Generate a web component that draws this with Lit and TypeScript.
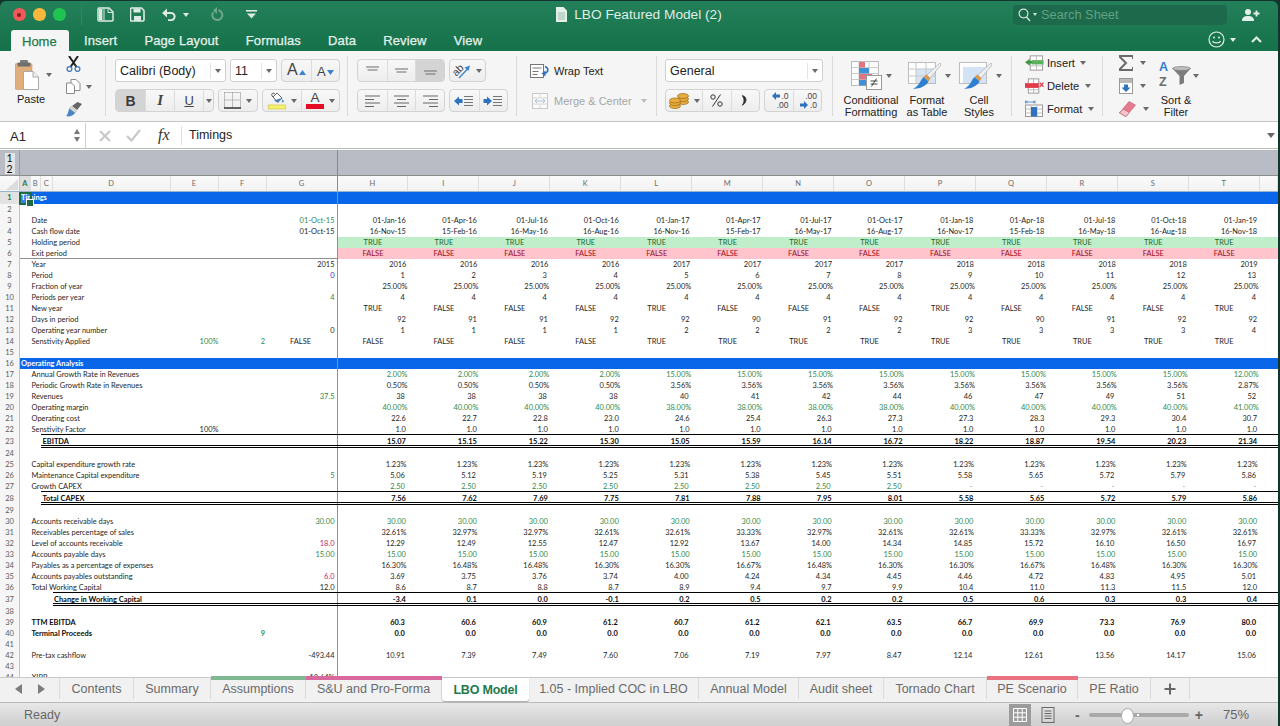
import { LitElement, html, svg, css, nothing } from "lit";
import { customElement } from "lit/decorators.js";

type Tone = "" | "g" | "p" | "b" | "d";
interface Row {
  n: number;
  label?: string;
  col?: "a" | "b" | "c" | "d";
  strong?: boolean;
  blue?: boolean;
  e?: [string, Tone?];
  f?: [string, Tone?];
  g?: [string, Tone?];
  gAlign?: boolean;
  vals?: string[];
  tone?: Tone;
  fill?: "ok" | "bad";
  center?: boolean;
  pad?: 1 | 2 | 3 | 4;
  rule?: "c" | "d";
  cls?: string;
  line?: boolean;
}

const rep = (v: string, n: number) => Array(n).fill(v);
const T = "TRUE";
const F = "FALSE";
const colLetters = "H I J K L M N O P Q R S T".split(" ");

const rows: Row[] = [
  { n: 1, label: "Timings", col: "a", blue: true, strong: true, cls: "h12" },
  { n: 2 },
  { n: 3, label: "Date", g: ["01-Oct-15", "g"], pad: 3, vals: "01-Jan-16 01-Apr-16 01-Jul-16 01-Oct-16 01-Jan-17 01-Apr-17 01-Jul-17 01-Oct-17 01-Jan-18 01-Apr-18 01-Jul-18 01-Oct-18 01-Jan-19".split(" ") },
  { n: 4, label: "Cash flow date", g: ["01-Oct-15"], pad: 3, vals: "16-Nov-15 15-Feb-16 16-May-16 16-Aug-16 16-Nov-16 15-Feb-17 16-May-17 16-Aug-17 16-Nov-17 15-Feb-18 16-May-18 16-Aug-18 16-Nov-18".split(" ") },
  { n: 5, label: "Holding period", vals: rep(T, 13), center: true, fill: "ok" },
  { n: 6, label: "Exit period", vals: rep(F, 13), center: true, fill: "bad", line: true },
  { n: 7, label: "Year", g: ["2015"], pad: 2, vals: [...rep("2016", 4), ...rep("2017", 4), ...rep("2018", 4), "2019"] },
  { n: 8, label: "Period", g: ["0", "b"], pad: 4, vals: "1 2 3 4 5 6 7 8 9 10 11 12 13".split(" ") },
  { n: 9, label: "Fraction of year", pad: 1, vals: rep("25.00%", 13) },
  { n: 10, label: "Periods per year", g: ["4", "g"], pad: 4, vals: rep("4", 13) },
  { n: 11, label: "New year", center: true, vals: [T, F, F, F, T, F, F, F, T, F, F, F, T] },
  { n: 12, label: "Days in period", pad: 3, vals: "92 91 91 92 92 90 91 92 92 90 91 92 92".split(" ") },
  { n: 13, label: "Operating year number", g: ["0"], pad: 4, vals: "1 1 1 1 2 2 2 2 3 3 3 3 4".split(" ") },
  { n: 14, label: "Senstivity Applied", e: ["100%", "g"], f: ["2", "g"], g: [F], gAlign: true, center: true, vals: [...rep(F, 4), ...rep(T, 9)] },
  { n: 15 },
  { n: 16, label: "Operating Analysis", col: "a", blue: true, strong: true },
  { n: 17, label: "Annual Growth Rate in Revenues", tone: "g", pad: 1, vals: [...rep("2.00%", 4), ...rep("15.00%", 8), "12.00%"] },
  { n: 18, label: "Periodic Growth Rate in Revenues", pad: 1, vals: [...rep("0.50%", 4), ...rep("3.56%", 8), "2.87%"] },
  { n: 19, label: "Revenues", g: ["37.5", "g"], pad: 4, vals: "38 38 38 38 40 41 42 44 46 47 49 51 52".split(" ") },
  { n: 20, label: "Operating margin", tone: "g", pad: 1, vals: [...rep("40.00%", 4), ...rep("38.00%", 4), ...rep("40.00%", 4), "41.00%"] },
  { n: 21, label: "Operating cost", pad: 3, vals: "22.6 22.7 22.8 23.0 24.6 25.4 26.3 27.3 27.3 28.3 29.3 30.4 30.7".split(" ") },
  { n: 22, label: "Senstivity Factor", e: ["100%"], pad: 3, vals: rep("1.0", 13) },
  { n: 23, label: "EBITDA", col: "c", strong: true, rule: "c", pad: 3, vals: "15.07 15.15 15.22 15.30 15.05 15.59 16.14 16.72 18.22 18.87 19.54 20.23 21.34".split(" ") },
  { n: 24 },
  { n: 25, label: "Capital expenditure growth rate", pad: 2, vals: rep("1.23%", 13) },
  { n: 26, label: "Maintenance Capital expenditure", g: ["5", "g"], pad: 4, vals: "5.06 5.12 5.19 5.25 5.31 5.38 5.45 5.51 5.58 5.65 5.72 5.79 5.86".split(" ") },
  { n: 27, label: "Growth CAPEX", tone: "g", pad: 4, vals: [...rep("2.50", 8), ...rep("-", 5)] },
  { n: 28, label: "Total CAPEX", col: "c", strong: true, rule: "c", pad: 3, vals: "7.56 7.62 7.69 7.75 7.81 7.88 7.95 8.01 5.58 5.65 5.72 5.79 5.86".split(" ") },
  { n: 29 },
  { n: 30, label: "Accounts receivable days", g: ["30.00", "g"], tone: "g", pad: 3, vals: rep("30.00", 13) },
  { n: 31, label: "Receivables percentage of sales", pad: 2, vals: "32.61% 32.97% 32.97% 32.61% 32.61% 33.33% 32.97% 32.61% 32.61% 33.33% 32.97% 32.61% 32.61%".split(" ") },
  { n: 32, label: "Level of accounts receivable", g: ["18.0", "p"], pad: 4, vals: "12.29 12.49 12.55 12.47 12.92 13.67 14.00 14.34 14.85 15.72 16.10 16.50 16.97".split(" ") },
  { n: 33, label: "Accounts payable days", g: ["15.00", "g"], tone: "g", pad: 3, vals: rep("15.00", 13) },
  { n: 34, label: "Payables as a percentage of expenses", pad: 2, vals: "16.30% 16.48% 16.48% 16.30% 16.30% 16.67% 16.48% 16.30% 16.30% 16.67% 16.48% 16.30% 16.30%".split(" ") },
  { n: 35, label: "Accounts payables outstanding", g: ["6.0", "p"], pad: 4, vals: "3.69 3.75 3.76 3.74 4.00 4.24 4.34 4.45 4.46 4.72 4.83 4.95 5.01".split(" ") },
  { n: 36, label: "Total Working Capital", g: ["12.0"], pad: 3, vals: "8.6 8.7 8.8 8.7 8.9 9.4 9.7 9.9 10.4 11.0 11.3 11.5 12.0".split(" ") },
  { n: 37, label: "Change in Working Capital", col: "d", strong: true, rule: "d", pad: 3, vals: "-3.4 0.1 0.0 -0.1 0.2 0.5 0.2 0.2 0.5 0.6 0.3 0.3 0.4".split(" ") },
  { n: 38 },
  { n: 39, label: "TTM EBITDA", strong: true, pad: 4, vals: "60.3 60.6 60.9 61.2 60.7 61.2 62.1 63.5 66.7 69.9 73.3 76.9 80.0".split(" ") },
  { n: 40, label: "Terminal Proceeds", strong: true, f: ["9", "g"], pad: 4, vals: rep("0.0", 13) },
  { n: 41 },
  { n: 42, label: "Pre-tax cashflow", g: ["-493.44"], pad: 4, vals: "10.91 7.39 7.49 7.60 7.06 7.19 7.97 8.47 12.14 12.61 13.56 14.17 15.06".split(" ") },
  { n: 43 },
  { n: 44, label: "XIRR", g: ["18.64%"] },
];

const sheetTabs: { t: string; c?: string }[] = [
  { t: "Contents", c: "w-con" },
  { t: "Summary", c: "w-sum" },
  { t: "Assumptions", c: "w-ass mark-green" },
  { t: "S&U and Pro-Forma", c: "w-su mark-pink" },
  { t: "LBO Model", c: "w-lbo active" },
  { t: "1.05 - Implied COC in LBO", c: "w-imp" },
  { t: "Annual Model", c: "w-ann" },
  { t: "Audit sheet", c: "w-aud" },
  { t: "Tornado Chart", c: "w-tor" },
  { t: "PE Scenario", c: "w-pes mark-red" },
  { t: "PE Ratio", c: "w-per" },
];

const caret = html`<span class="caret"></span>`;

/* ---- title bar icons ---- */
const iSidebar = html`<svg width="17" height="15" viewBox="0 0 17 15"><path d="M2 1h10l4 4v8a1 1 0 0 1-1 1H2a1 1 0 0 1-1-1V2a1 1 0 0 1 1-1z" fill="none" stroke="#dcebe3" stroke-width="1.5"/><rect x="2" y="2" width="3.4" height="11" fill="#dcebe3"/><path d="M7 1.500v12" stroke="#dcebe3" stroke-width="1"/><path d="M11 1.500v4h4.500" fill="none" stroke="#dcebe3"/></svg>`;
const iSave = html`<svg width="15" height="15" viewBox="0 0 15 15"><path d="M1.500 1h10l2.500 2.500V13a1 1 0 0 1-1 1H1.500a1 1 0 0 1-1-1V2a1 1 0 0 1 1-1z" fill="none" stroke="#dcebe3" stroke-width="1.6"/><rect x="3.500" y="1.500" width="7" height="4" fill="#dcebe3"/><rect x="4" y="9" width="7" height="5" fill="#dcebe3"/></svg>`;
const iUndo = html`<svg width="16" height="13" viewBox="0 0 16 13"><path d="M2.500 5h7.500a3.600 3.600 0 0 1 0 7.200H7" fill="none" stroke="#dcebe3" stroke-width="2"/><path d="M6 .5 1 5l5 4.500z" fill="#dcebe3"/></svg>`;
const iRedo = html`<svg width="14" height="15" viewBox="0 0 14 15"><path d="M8.500 3.200a5 5 0 1 1-5.300 2" fill="none" stroke="#6ea78c" stroke-width="2"/><path d="M7 0v7L3 3.500z" fill="#6ea78c"/></svg>`;
const iCustom = html`<svg width="11" height="9" viewBox="0 0 11 9"><rect width="11" height="1.600" fill="#dcebe3"/><path d="M1 3.500h9L5.500 8.500z" fill="#dcebe3"/></svg>`;
const iTitleDoc = html`<svg width="11" height="15" viewBox="0 0 11 15"><path d="M0 0h7.500L11 3.500V15H0z" fill="#e4efe9"/><path d="M2 6h7M2 8h7M2 10h7M2 12h7" stroke="#7ba993" stroke-width=".7"/></svg>`;
const iSearch = html`<svg width="13" height="14" viewBox="0 0 13 14"><circle cx="5.500" cy="5.500" r="4.400" fill="none" stroke="#d5e6dd" stroke-width="1.200"/><path d="m8.500 9 3.500 4" stroke="#d5e6dd" stroke-width="1.300"/></svg>`;
const iPerson = html`<svg width="18" height="12" viewBox="0 0 18 12"><circle cx="6" cy="3" r="3" fill="#e3efe9"/><path d="M0 12c0-4 2.500-5 6-5s6 1 6 5z" fill="#e3efe9"/><path d="M14.500 1.500v6M11.500 4.500h6" stroke="#e3efe9" stroke-width="1.800"/></svg>`;
const iSmile = html`<svg width="17" height="17" viewBox="0 0 17 17"><circle cx="8.500" cy="8.500" r="7.500" fill="none" stroke="#e3efe9" stroke-width="1.200"/><circle cx="6" cy="6.500" r="1" fill="#e3efe9"/><circle cx="11" cy="6.500" r="1" fill="#e3efe9"/><path d="M4.500 10c1 2.500 7 2.500 8 0" fill="none" stroke="#e3efe9" stroke-width="1.100"/></svg>`;
const iChevUp = html`<svg width="11" height="7" viewBox="0 0 11 7"><path d="m1 6 4.500-4.500L10 6" fill="none" stroke="#e3efe9" stroke-width="2"/></svg>`;

/* ---- ribbon icons ---- */
const iPaste = html`<svg width="24" height="30" viewBox="0 0 24 30"><rect x="0" y="3.500" width="17" height="26" rx="1.500" fill="#dfae7b" stroke="#c79766" stroke-width=".6"/><rect x="5" y="0" width="8" height="3" rx="1" fill="#7b7b7b"/><rect x="2.500" y="2.500" width="13" height="4" rx="1" fill="#6f6f6f"/><path d="M8.500 11.500h9.500l5.500 5.500v12.500h-15z" fill="#fff" stroke="#a9a9a9"/><path d="M18 11.500V17h5.500" fill="#eee" stroke="#a9a9a9"/></svg>`;
const iCut = html`<svg width="15" height="16" viewBox="0 0 15 16"><path d="M3 0l7.500 11M12 0 4.500 11" stroke="#222" stroke-width="2"/><circle cx="3.500" cy="13" r="2.400" fill="none" stroke="#3f79b8" stroke-width="1.300"/><circle cx="11.500" cy="13" r="2.400" fill="none" stroke="#3f79b8" stroke-width="1.300"/></svg>`;
const iCopy = html`<svg width="15" height="15" viewBox="0 0 15 15"><path d="M5 .5h5l4 4v7H5z" fill="#fff" stroke="#8a8a8a"/><path d="M.5 4h5l3 3v7.500H.5z" fill="#fff" stroke="#8a8a8a"/></svg>`;
const iBrush = html`<svg width="17" height="15" viewBox="0 0 17 15"><path d="M6 4 11.500 0 16 2 11 8z" fill="#666"/><path d="M5 4.500 10.500 9 9 11 3.500 6.500z" fill="#dcdcdc" stroke="#999" stroke-width=".5"/><path d="M3.500 6.500 9 11c-2 3-6 4-9 3 2-1 2-5 3.500-7.500z" fill="#4a85c4"/></svg>`;
const triUp = html`<svg width="7" height="5" viewBox="0 0 7 5"><path d="M0 5 3.500 0 7 5z" fill="#3b83cc"/></svg>`;
const triDn = html`<svg width="7" height="5" viewBox="0 0 7 5"><path d="M0 0h7L3.500 5z" fill="#3b83cc"/></svg>`;
const iBorder = html`<svg width="17" height="17" viewBox="0 0 17 17"><path d="M.5.500h16M.5 8h16M.5.500v15M8.500.500v15M16.500.500v15" stroke="#888" stroke-dasharray="1 1" fill="none"/><path d="M0 16h17" stroke="#333" stroke-width="1.300"/></svg>`;
const iFill = html`<svg width="18" height="18" viewBox="0 0 18 18"><path d="m5 5 4-4 5 5-4 4.500z" fill="#fff" stroke="#666"/><path d="M5 5c-3-3 0-5 2-3" fill="none" stroke="#555"/><path d="M6 8.500 13.500 6l-4 4.500z" fill="#3f7fc2"/><path d="M14.500 7c1.500 2 1.500 3 .5 3.500s-1-1.500-.5-3.500z" fill="#3f7fc2"/><rect x=".5" y="13" width="17" height="4" fill="#f7f16a" stroke="#d2c94e" stroke-width=".7"/></svg>`;
const iAlignV = (y: number) => html`<svg width="13" height="9" viewBox="0 0 13 9"><path d="M0 ${y}h13M1.500 ${y + 3}h10" stroke="#6e6e6e" stroke-width="1"/></svg>`;
const iAlignH = (kind: "l" | "c" | "r") => {
  const p = kind === "l" ? "M0 1h15M0 4.500h9M0 8h15M0 11.500h9" : kind === "c" ? "M0 1h15M3 4.500h9M0 8h15M3 11.500h9" : "M0 1h15M6 4.500h9M0 8h15M6 11.500h9";
  return html`<svg width="15" height="12" viewBox="0 0 15 12"><path d=${p} stroke="#666" stroke-width="1"/></svg>`;
};
const iOrientArrow = html`<svg width="18" height="16" viewBox="0 0 18 16"><path d="m6 15 8.500-9" stroke="#3b83cc" stroke-width="1.300"/><path d="M17 2.500 15.500 8 11.500 4.500z" fill="#3b83cc"/></svg>`;
const iIndent = (dir: "l" | "r") => html`<svg width="20" height="12" viewBox="0 0 20 12"><path d="M10 1.500h9M10 4.500h9M10 7.500h9M10 10.500h9" stroke="#666" stroke-width=".9"/>${dir === "l"
  ? svg`<path d="M0 6 5 1.500V4h3.500v4H5v2.500z" fill="#2f73c0"/>`
  : svg`<path d="M9 6 4 1.500V4H.5v4H4v2.500z" fill="#2f73c0"/>`}</svg>`;
const iWrap = html`<svg width="20" height="14" viewBox="0 0 20 14"><rect x=".5" y=".5" width="13" height="13" fill="#fff" stroke="#777"/><path d="M2.500 4h9M2.500 7.500h6M2.500 10.500h5" stroke="#777"/><path d="M15 2.500c4 1.500 4 6-1 7" fill="none" stroke="#2f73c0" stroke-width="1.500"/><path d="M15.500 6.500v6l-4-3z" fill="#2f73c0"/></svg>`;
const iMerge = html`<svg width="16" height="16" viewBox="0 0 16 16"><rect x=".5" y=".5" width="15" height="15" fill="#fbfbfb" stroke="#c9c9c9"/><path d="M.5 5h15M.5 11h15M8 .5V4M8 12v3.500" stroke="#d4d4d4"/><path d="M3 8h10M5 6 3 8l2 2M11 6l2 2-2 2" fill="none" stroke="#a9bdd2"/></svg>`;
const iCoins = html`<svg width="20" height="16" viewBox="0 0 20 16"><g stroke="#9a6a1a" stroke-width=".7" fill="#e8ad3c"><ellipse cx="14" cy="9" rx="5.500" ry="2.500"/><ellipse cx="14" cy="6" rx="5.500" ry="2.500"/><ellipse cx="14" cy="3" rx="5.500" ry="2.500"/><ellipse cx="6" cy="13" rx="5.500" ry="2.500"/><ellipse cx="6" cy="10" rx="5.500" ry="2.500"/><ellipse cx="6" cy="7.500" rx="5.500" ry="2.500"/></g></svg>`;
const iPct = html`<svg width="13" height="13" viewBox="0 0 13 13"><circle cx="3" cy="3" r="2.200" fill="none" stroke="#333" stroke-width="1"/><circle cx="10" cy="10" r="2.200" fill="none" stroke="#333" stroke-width="1"/><path d="M10.500.5 2.500 12.500" stroke="#333" stroke-width="1"/></svg>`;
const iComma = html`<svg width="6" height="11" viewBox="0 0 6 11"><path d="M0 .5c5 .5 6 7 0 10 2.500-3 2.500-7 0-10z" fill="#333" stroke="#333" stroke-width=".6"/></svg>`;
const arrowLeft = html`<svg width="8" height="8" viewBox="0 0 8 8"><path d="M0 4 4 0v2.500h4v3H4V8z" fill="#2f73c0"/></svg>`;
const arrowRight = html`<svg width="8" height="8" viewBox="0 0 8 8"><path d="M8 4 4 0v2.500H0v3h4V8z" fill="#2f73c0"/></svg>`;
const iCond = html`<svg width="31" height="29" viewBox="0 0 31 29"><rect x=".5" y=".5" width="27" height="24" fill="#fdfdfd" stroke="#bbb"/><path d="M8 .5v24M18 .5v24M.5 6.500h27M.5 12.500h27M.5 18.500h27" stroke="#ccc"/><rect x="8" y="1" width="6" height="5.500" fill="#e2737f"/><rect x="8" y="7" width="10" height="5.500" fill="#3f90d6"/><rect x="8" y="13" width="13" height="5.500" fill="#e2737f"/><rect x="8" y="19" width="8" height="5.500" fill="#3f90d6"/><rect x="15.500" y="14.500" width="15" height="14" fill="#fff" stroke="#999"/><path d="M19.500 20h7M19.500 23h7M25.500 17.500l-5 8" stroke="#333" stroke-width=".9"/></svg>`;
const brush = svg`<path d="M32 1 19 13l3 3L33 3z" fill="#f2f2f2" stroke="#aaa" stroke-width=".7"/><path d="M18 12.500l4.500 4-2 3-5-4.500z" fill="#d99b4f"/><path d="M15.500 15 20.500 19.500C18 25 9 27.500 5 26.500 10 25.500 12 19 15.500 15z" fill="#2f7fd0"/>`;
const iTable = html`<svg width="33" height="28" viewBox="0 0 33 28"><rect x=".5" y=".5" width="27" height="21" fill="#fdfdfd" stroke="#bdbdbd"/><rect x="8" y="7" width="19" height="14" fill="#d6e4f3"/><path d="M8 .5v21M18 .5v21M.5 7h27M.5 14h27" stroke="#c8c8c8"/>${brush}</svg>`;
const iCell = html`<svg width="33" height="28" viewBox="0 0 33 28"><rect x=".5" y=".5" width="27" height="21" fill="#fdfdfd" stroke="#bdbdbd"/><rect x="4" y="5" width="23" height="16" fill="#d3e3f5"/>${brush}</svg>`;
const iInsert = html`<svg width="20" height="16" viewBox="0 0 20 16"><rect x="5.500" y=".5" width="13" height="15" fill="#fff" stroke="#999"/><path d="M12 .5v15M5.500 11h13" stroke="#bbb"/><rect x="7" y="5" width="12.500" height="4.500" fill="#5bb25e"/><path d="M0 7.200 5 3.500v7.400z" fill="#3e9a41"/><path d="M4 6h3.500v2.500H4z" fill="#3e9a41"/></svg>`;
const iDelete = html`<svg width="20" height="16" viewBox="0 0 20 16"><rect x="3.500" y=".5" width="11" height="15" fill="#fff" stroke="#999"/><path d="M9 .5v15M3.500 12h11" stroke="#bbb"/><rect x="0" y="5" width="14.500" height="5" fill="#e23a48"/><path d="m15.500 4.500 4 4.500m0-4.500-4 4.500" stroke="#e23a48" stroke-width="1.300"/></svg>`;
const iFormat = html`<svg width="18" height="17" viewBox="0 0 18 17"><path d="M.5.500v3M10 .5v3M1 2h8.500M2.500 1 1 2l1.500 1M8 1l1.500 1L8 3" fill="none" stroke="#3b83cc" stroke-width=".8"/><rect x=".5" y="5" width="17" height="11.500" fill="#fff" stroke="#999"/><path d="M6 5v11.500M12 5v11.500M.5 9h17M.5 13h17" stroke="#bbb"/><rect x="6" y="7" width="6" height="9.500" fill="#2f73c0"/></svg>`;
const iSum = html`<svg width="14" height="16" viewBox="0 0 14 16"><path d="M14 4V1H1v1l6 6-6 6v1h13v-3" fill="none" stroke="#6b6b6b" stroke-width="2"/></svg>`;
const iDown = html`<svg width="14" height="16" viewBox="0 0 14 16"><rect x=".5" y=".5" width="13" height="15" fill="#fff" stroke="#999"/><rect x="1" y="1" width="12" height="4" fill="#b9b9b9"/><path d="M5 6.500h4v3h2.500L7 14 2.500 9.500H5z" fill="#2f73c0"/></svg>`;
const iEraser = html`<svg width="17" height="16" viewBox="0 0 17 16"><path d="M10 .5 16.500 4 7 15.500.5 12z" fill="#e77a8c" stroke="#b85a6b" stroke-width=".6"/><path d="M.5 12 4 8l6.500 3.500L7 15.500z" fill="#f2c4cc" stroke="#b85a6b" stroke-width=".6"/></svg>`;
const iFunnel = html`<svg width="19" height="19" viewBox="0 0 19 19"><path d="M0 2h19l-7 8v7l-4.500 2v-9z" fill="#7c7c7c"/><ellipse cx="9.500" cy="2.500" rx="9" ry="2" fill="#bdbdbd" stroke="#777" stroke-width=".6"/></svg>`;

const iX = html`<svg width="14" height="14" viewBox="0 0 14 14"><path d="m2 2 10 10M12 2 2 12" stroke="#c9c9c9" stroke-width="2.200"/></svg>`;
const iCheck = html`<svg width="15" height="13" viewBox="0 0 15 13"><path d="m1 7 4.500 4.500L14 1" fill="none" stroke="#c9c9c9" stroke-width="2.200"/></svg>`;

@customElement("app-root")
export class AppRoot extends LitElement {
  static styles = css`
    :host { display: block; width: 1280px; height: 726px; background: #12362c; overflow: hidden; font-family: "Liberation Sans", Arial, sans-serif; color: #222; }
    * { box-sizing: border-box; }
    .win { width: 1278px; height: 725px; display: flex; flex-direction: column; border-radius: 6px 6px 0 0; overflow: hidden; margin-top: 1px; position: relative; }
    .caret { display: inline-block; width: 0; height: 0; border-left: 3px solid transparent; border-right: 3px solid transparent; border-top: 4px solid #6a6a6a; flex: none; }

    /* title */
    .title { height: 50px; background: linear-gradient(#24805a, #157149); flex: none; color: #dcebe3; display: flex; flex-direction: column; }
    .t1 { height: 27px; display: grid; grid-template-columns: 1fr auto 1fr; align-items: center; flex: none; }
    .t1l { display: flex; align-items: center; padding-left: 13px; }
    .light { width: 12.500px; height: 12.500px; border-radius: 50%; margin-right: 7.500px; display: grid; place-items: center; flex: none; }
    .light.r { background: #f1585a; }
    .light.r::after { content: ""; width: 4px; height: 4px; border-radius: 50%; background: #8a1a20; }
    .light.y { background: #f6b73c; }
    .light.g { background: #1fc34f; }
    .qs { display: flex; align-items: center; margin-left: 8px; border-left: 1px solid #2f8a63; height: 20px; padding-left: 15px; }
    .q2 { margin-left: 16px; display: flex; }
    .q3 { margin-left: 16px; display: flex; }
    .q3c { margin-left: 6px; border-top-color: #dcebe3; }
    .q4 { margin-left: 21px; display: flex; }
    .q5 { margin-left: 22px; display: flex; }
    .tc { display: flex; align-items: center; gap: 7px; font-size: 13.700px; color: #dfeee6; }
    .t1r { display: flex; justify-content: flex-end; align-items: center; padding-right: 18px; }
    .search { width: 214px; height: 20px; background: #1c6a4b; border-radius: 4px; display: flex; align-items: center; padding-left: 5px; font-size: 12.800px; color: #62a185; margin-right: 15px; }
    .search .mini { margin: 0 4px 0 2px; border-top-color: #d5e6dd; border-left-width: 2px; border-right-width: 2px; border-top-width: 3px; }
    .t2 { flex: 1; display: flex; align-items: flex-end; padding-left: 11px; font-size: 13px; }
    .rtab { height: 23px; display: flex; align-items: center; color: #e6f1eb; margin-right: 27.300px; letter-spacing: .1px; -webkit-text-stroke: .25px #e6f1eb; padding-bottom: 2px; }
    .rtab.on { background: #f5f5f5; color: #1f7a4d; -webkit-text-stroke: .25px #1f7a4d; padding: 0 11px 1px; width: 58px; border-radius: 3px 3px 0 0; margin-right: 15px; letter-spacing: 0; }
    .t2r { margin-left: auto; display: flex; align-items: center; height: 23px; padding-right: 16px; margin-bottom: 2px; }
    .t2r .caret { border-top-color: #e3efe9; margin: 0 15px 0 5px; }

    /* ribbon */
    .ribbon { height: 71px; flex: none; background: #f5f5f5; border-bottom: 1px solid #c4c4c4; display: flex; font-size: 11px; color: #222; }
    .grp { height: 100%; position: relative; flex: none; }
    .grp::after { content: ""; position: absolute; right: 0; top: 5px; bottom: 5px; width: 1px; background: #dadada; }
    .grp.end::after { display: none; }
    .g-clip { width: 106px; padding: 7px 0 0 15px; display: flex; }
    .pastecol { width: 45px; display: flex; flex-direction: column; }
    .pasteicon { display: flex; align-items: center; gap: 7px; height: 33px; }
    .pastelbl { margin-top: 2px; padding-left: 2px; }
    .smalls { display: flex; flex-direction: column; gap: 6px; padding: 0 0 0 6px; margin-top: -3px; }
    .smalls > div { display: flex; align-items: center; gap: 5px; height: 17px; }
    .stack { padding-top: 8px; display: flex; flex-direction: column; gap: 7px; }
    .line { display: flex; gap: 4px; height: 23px; }
    .g-font { width: 242px; padding-left: 9px; }
    .g-align { width: 169px; padding-left: 9px; }
    .g-wrap { width: 140px; padding-left: 13px; }
    .g-num { width: 176px; padding-left: 8px; }
    .g-sty { width: 179px; padding: 7px 0 0 8px; display: flex; }
    .g-cells { width: 91px; padding: 0 0 0 13px; display: flex; flex-direction: column; }
    .g-edit { flex: 1; display: flex; padding: 0 0 0 16px; }
    .box { background: #fff; border: 1px solid #cfcfcf; border-radius: 3px; display: flex; align-items: center; font-size: 12.500px; color: #222; height: 23px; }
    .box .txt { flex: 1; padding-left: 4px; }
    .box .dd { width: 15px; height: 16px; border-left: 1px solid #e4e4e4; display: grid; place-items: center; }
    .w-fn { width: 111px; }
    .w-sz { width: 47px; }
    .w-gen { width: 158px; }
    .seg { display: flex; border: 1px solid #d3d3d3; border-radius: 4px; background: linear-gradient(#f8f8f8, #ededed); height: 23px; }
    .seg > div { display: flex; align-items: center; justify-content: center; border-left: 1px solid #dcdcdc; gap: 5px; }
    .seg > div:first-child { border-left: 0; border-radius: 3px 0 0 3px; }
    .seg > div:last-child { border-radius: 0 3px 3px 0; }
    .seg > .on { background: #d4d4d4; }
    .letter { font-size: 14px; font-weight: bold; color: #3a3a3a; }
    .ital { font: italic bold 15px "Liberation Serif", serif; color: #444; }
    .under { font-size: 13px; color: #444; text-decoration: underline; }
    .ga { color: #444; line-height: 1; }
    .ga.big { font-size: 16px; }
    .ga.sm { font-size: 13px; }
    .gs > div { gap: 1px; align-items: flex-end; padding-bottom: 3px; }
    .gs svg { margin-bottom: 3px; }
    .colora { display: flex; flex-direction: column; align-items: center; width: 18px; line-height: 12px; font-size: 13.500px; color: #444; }
    .colora i { display: block; width: 18px; height: 5px; background: #e60b24; }
    .orient { display: grid; width: 18px; height: 16px; }
    .orient > * { grid-area: 1 / 1; }
    .orient span { font-size: 10.500px; color: #444; transform: rotate(-45deg); transform-origin: 6px 8px; line-height: 12px; }
    .dec { display: flex; flex-direction: column; font-size: 8.500px; line-height: 8.500px; color: #444; align-items: flex-end; width: 19px; }
    .dec > div { display: flex; align-items: center; gap: 1.500px; }
    .w-gs { width: 59px; } .w-gs > div { width: 50%; }
    .w-biu { width: 99px; } .w-biu > div { width: 29.500px; } .w-biu > div:last-child { width: 10px; }
    .w-bd { width: 40px; } .w-bd > div { width: 100%; }
    .w-clr { width: 78px; } .w-clr > div { width: 50%; }
    .w-al { width: 88px; } .w-al > div { width: 33.340%; }
    .w-or { width: 37px; } .w-or > div { width: 100%; }
    .w-in { width: 59px; } .w-in > div { width: 50%; }
    .w-acc { width: 95px; } .w-acc > div:nth-child(1) { width: 37px; } .w-acc > div:nth-child(2) { width: 29px; } .w-acc > div:nth-child(3) { width: 29px; }
    .w-dec { width: 58px; } .w-dec > div { width: 50%; }
    .wrapline { display: flex; align-items: center; gap: 4px; height: 23px; }
    .mergeline { color: #a6a6a6; padding-left: 2px; gap: 6px; }
    .mergeline .caret { border-top-color: #bdbdbd; margin-left: 3px; }
    .sty { display: flex; flex-direction: column; align-items: center; line-height: 12px; text-align: center; }
    .sty .ic { display: flex; align-items: center; gap: 4px; height: 35px; }
    .sty .lb { margin-top: 1px; }
    .s1 { width: 60px; }
    .s2 { width: 50px; margin-left: 1px; } .s2 .ic { padding-left: 5px; }
    .s3 { width: 50px; margin-left: 2px; } .s3 .ic { padding-left: 3px; }
    .cellrow { height: 23px; display: flex; align-items: center; font-size: 11.200px; gap: 3px; }
    .cellrow .caret { margin-left: 2.500px; }
    .cw { width: 19px; display: flex; justify-content: flex-start; }
    .ecol { display: flex; flex-direction: column; width: 40px; }
    .ecol > div { height: 23px; display: flex; align-items: center; gap: 7px; }
    .sortcol { display: flex; flex-direction: column; line-height: 12px; width: 34px; padding-top: 7px; }
    .sortcol .ic { display: flex; align-items: center; height: 35px; gap: 2px; width: 40px; }
    .sortcol .lb { margin-top: 1px; text-align: center; width: 34px; }
    .sorticon { display: flex; flex-direction: column; font-weight: bold; font-size: 12.500px; line-height: 14.400px; width: 11px; margin-top: -2px; }
    .sorticon .a { color: #2f7fd0; }
    .sorticon .z { color: #6b6b6b; }

    /* formula bar */
    .fbar { height: 27px; flex: none; background: #fff; display: flex; align-items: center; border-bottom: 1px solid #bdbdbd; border-top: 1px solid #fff; }
    .name { width: 86px; height: 100%; border-right: 1px solid #cfcfcf; display: flex; align-items: center; padding-left: 10px; font-size: 13px; justify-content: space-between; padding-right: 5px; padding-top: 2px; }
    .spin { display: flex; flex-direction: column; gap: 3px; margin-top: -2px; }
    .spin i { width: 0; height: 0; border-left: 3.500px solid transparent; border-right: 3.500px solid transparent; }
    .spin .u { border-bottom: 5px solid #777; }
    .spin .dn { border-top: 5px solid #777; }
    .fxs { display: flex; align-items: center; padding-left: 12px; }
    .fxs svg:nth-child(2) { margin-left: 14px; }
    .fx { margin-left: 17px; font: italic 16px "Liberation Serif", serif; color: #333; width: 24px; border-right: 1px solid #e0e0e0; height: 19px; line-height: 18px; margin-right: 7px; }
    .ftext { font-size: 12.500px; flex: 1; padding-bottom: 2px; }
    .fcar { margin-right: 3px; border-top-color: #666; border-left-width: 4px; border-right-width: 4px; border-top-width: 5px; }

    /* sheet */
    .sheet { height: 528px; flex: none; background: #fff; overflow: hidden; position: relative; padding-top: 1px; }
    .outline { height: 26px; background: #b9bcc5; border-bottom: 1px solid #8d8d8d; display: grid; grid-template-columns: 20px 317.500px 1fr; }
    .ol-l { background: #b9bcc5; border-right: 1px solid #9a9a9a; display: flex; flex-direction: column; align-items: center; padding-top: 3px; font: 10.500px/10.500px "Lato", sans-serif; }
    .ol-l span { width: 10px; text-align: center; background: #e4e4e4; color: #111; height: 10.500px; }
    .ol-m { border-right: 1px solid #84878f; }
    .heads, .row { display: grid; grid-template-columns: 20px 10.500px 10.500px 11.500px 118px 48px 48px 71px 1fr; }
    .heads { grid-template-columns: 20px 10.500px 10.500px 11.500px 118px 48px 48px 71px repeat(13, 70.950px) 1fr; height: 16px; background: linear-gradient(#fafafa, #f2f2f2); border-bottom: 1px solid #9cb3cc; font: 7.500px "Lato", sans-serif; color: #6b6b6b; }
    .heads > div { display: grid; place-items: center; border-right: 1px solid #dedede; height: 15px; }
    .heads .corner { background: none; position: relative; border-right: 1px solid #c8c8c8; }
    .heads .corner svg { position: absolute; right: 1px; bottom: 1px; }
    .heads .act { background: #dedede; color: #1f7a4d; font-weight: 700; }
    .heads .gh { border-right: 1px solid #8d8d8d; }
    .rows { font: 7.450px/11px "Lato", sans-serif; color: #262626; }
    .row { height: 11px; position: relative; align-items: stretch; }
    .row.h12 { height: 11.500px; }
    .row.tall { height: 13px; }
    .row > div { grid-row: 1; white-space: nowrap; min-width: 0; display: flex; align-items: center; }
    .rh { grid-column: 1; background: #f6f6f6; border-right: 1px solid #c4c4c4; justify-content: center; color: #5c5c5c; font-size: 7.500px; position: relative; z-index: 2; }
    .rh.act { background: #e2e2e2; color: #1f7a4d; font-weight: 700; }
    .lab { position: relative; z-index: 1; }
    .lab.a { grid-column: 2; padding-left: 1px; } .lab.b { grid-column: 3; padding-left: 1px; }
    .lab.c { grid-column: 4; padding-left: 1.500px; } .lab.d { grid-column: 5; padding-left: 1.500px; }
    .strong { font-weight: 700; color: #0c0c0c; }
    .blue { background: #0a66e8; }
    .blue .lab { color: #fff; }
    .e { grid-column: 6; justify-content: flex-end; }
    .f { grid-column: 7; justify-content: flex-end; padding-right: 1.500px; }
    .gc { grid-column: 8; justify-content: flex-end; padding-right: 2px; border-right: 1px solid #8f8f8f; }
    .gc.mid { justify-content: center; }
    .vals { grid-column: 9; display: grid !important; grid-template-columns: repeat(13, 70.950px) 1fr; align-items: stretch !important; }
    .v { display: flex; align-items: center; justify-content: flex-end; }
    .v.mid { justify-content: center; }
    .p1 .v { padding-right: 1px; }
    .p2 .v { padding-right: 2px; }
    .p3 .v { padding-right: 2.500px; }
    .p4 .v { padding-right: 3.500px; }
    .t-g { color: #2f8a4c; }
    .t-p { color: #c0246e; }
    .t-b { color: #2b2bd6; }
    .t-d { color: #999; }
    .ok { background: #c0eecb; color: #1c6b2c; }
    .bad { background: #ffc4cc; color: #9c0a22; }
    .hline { border-bottom: 1px solid #8f8f8f; }
    .rule { border-top: 1px solid #000; border-bottom: 3px double #000; pointer-events: none; position: relative; top: -.500px; height: 14px; }
    .rule.c { grid-column: 4 / -1; }
    .rule.d { grid-column: 5 / -1; }
    .sel { position: absolute; left: 19px; top: 43px; width: 13px; height: 13px; border: 2px solid #1c6b45; z-index: 5; background: rgba(255,255,255,.18); }
    .sel::after { content: ""; position: absolute; right: -4px; bottom: -4px; width: 6px; height: 6px; background: #1c6b45; border: 1px solid #fff; }

    /* sheet tabs */
    .tabs { height: 25px; flex: none; background: #f1f1f1; border-top: 1px solid #c9c9c9; display: flex; font-size: 12.500px; color: #6a6a6a; position: relative; }
    .nav { width: 60px; display: flex; align-items: center; padding-left: 15px; gap: 16px; border-right: 1px solid #d9d9d9; height: 21px; }
    .nav i { width: 0; height: 0; border-top: 5px solid transparent; border-bottom: 5px solid transparent; }
    .nav .lf { border-right: 7px solid #7c7c7c; }
    .nav .rt { border-left: 7px solid #7c7c7c; }
    .tab { height: 21px; display: flex; align-items: center; justify-content: center; border-right: 1px solid #d9d9d9; position: relative; white-space: nowrap; flex: none; }
    .mark-green::before, .mark-pink::before, .mark-red::before { content: ""; position: absolute; left: 0; right: -1px; top: -2px; height: 4px; }
    .mark-green::before { background: #7fb892; }
    .mark-pink::before { background: #d9689f; }
    .mark-red::before { background: #ea7280; }
    .tab.active { background: #fff; height: 23px; color: #1f7a4d; font-weight: 700; letter-spacing: -.2px; border-radius: 0 0 3px 3px; border: 0; box-shadow: 0 1px 1px #aaa; z-index: 1; }
    .w-con { width: 74px; } .w-sum { width: 77px; } .w-ass { width: 95px; } .w-su { width: 136px; }
    .w-lbo { width: 87px; } .w-imp { width: 170px; } .w-ann { width: 100px; } .w-aud { width: 85px; }
    .w-tor { width: 103px; } .w-pes { width: 91px; } .w-per { width: 73px; }
    .plus { width: 39px; height: 21px; display: grid; place-items: center; border-right: 1px solid #d9d9d9; }

    /* status */
    .status { height: 24px; flex: none; background: linear-gradient(#e7e7e7, #cfcfcf); border-top: 1px solid #bbb; display: flex; align-items: center; padding-left: 24px; font-size: 12.500px; color: #666; }
    .sr { margin-left: auto; display: flex; align-items: center; height: 100%; padding-right: 29px; }
    .vbtn { width: 22px; height: 22px; background: #9b9b9b; display: grid; place-items: center; }
    .pg { margin-left: 10px; margin-right: 20px; display: flex; }
    .slider { width: 100px; height: 4px; background: #a9a9a9; border-radius: 2px; margin: 0 6px 0 9px; position: relative; }
    .slider::after { content: ""; position: absolute; left: 32px; top: -5px; width: 11px; height: 14px; background: #fff; border: 1px solid #b0b0b0; border-radius: 50%; }
    .slider::before { content: ""; position: absolute; left: 48px; top: 1px; width: 2px; height: 2px; background: #fff; }
    .zm { margin-left: 20px; font-size: 13px; }
    .mp { color: #666; font-size: 14px; font-weight: 700; line-height: 12px; }
  `;

  private cell(cls: string, v?: [string, Tone?]) {
    return html`<div class="${cls} ${v?.[1] ? "t-" + v[1] : ""}">${v?.[0] ?? nothing}</div>`;
  }

  private renderRow(r: Row) {
    const classes = [
      "row",
      r.blue ? "blue" : "",
      r.rule ? "tall" : "",
      r.cls ?? "",
      r.pad ? "p" + r.pad : "",
      r.line ? "hline" : "",
    ].join(" ");
    const toneOf = (v: string) => (v === "-" ? "t-d" : r.tone ? "t-" + r.tone : "");
    return html`<div class=${classes}>
      <div class="rh ${r.n === 1 ? "act" : ""}">${r.n}</div>
      ${r.label
        ? html`<div class="lab ${r.col ?? "b"} ${r.strong ? "strong" : ""}">${r.label}</div>`
        : nothing}
      ${r.e ? this.cell("e", r.e) : nothing}
      ${r.f ? this.cell("f " + (r.strong ? "strong" : ""), r.f) : nothing}
      ${this.cell(`gc ${r.gAlign ? "mid" : ""}`, r.g)}
      ${r.vals
        ? html`<div class="vals">
            ${r.vals.map(
              (v) => html`<div class="v ${r.center ? "mid" : ""} ${r.fill ?? ""} ${toneOf(v)} ${r.strong ? "strong" : ""}">${v}</div>`
            )}
            ${r.fill ? html`<div class=${r.fill}></div>` : nothing}
          </div>`
        : nothing}
      ${r.rule ? html`<div class="rule ${r.rule}"></div>` : nothing}
    </div>`;
  }

  render() {
    return html`<div class="win">
      <div class="title">
        <div class="t1">
          <div class="t1l">
            <span class="light r"></span><span class="light y"></span><span class="light g"></span>
            <div class="qs">
              ${iSidebar}<span class="q2">${iSave}</span><span class="q3">${iUndo}</span><span class="caret q3c"></span>
              <span class="q4">${iRedo}</span><span class="q5">${iCustom}</span>
            </div>
          </div>
          <div class="tc">${iTitleDoc}<span>LBO Featured Model (2)</span></div>
          <div class="t1r">
            <div class="search">${iSearch}<span class="caret mini"></span><span>Search Sheet</span></div>
            ${iPerson}
          </div>
        </div>
        <div class="t2">
          <div class="rtab on">Home</div>
          <div class="rtab">Insert</div>
          <div class="rtab">Page Layout</div>
          <div class="rtab">Formulas</div>
          <div class="rtab">Data</div>
          <div class="rtab">Review</div>
          <div class="rtab">View</div>
          <div class="t2r">${iSmile}<span class="caret"></span>${iChevUp}</div>
        </div>
      </div>

      <div class="ribbon">
        <div class="grp g-clip">
          <div class="pastecol">
            <div class="pasteicon">${iPaste}${caret}</div>
            <div class="pastelbl">Paste</div>
          </div>
          <div class="smalls">
            <div>${iCut}</div>
            <div>${iCopy}${caret}</div>
            <div>${iBrush}</div>
          </div>
        </div>

        <div class="grp g-font stack">
          <div class="line">
            <div class="box w-fn"><span class="txt">Calibri (Body)</span><span class="dd">${caret}</span></div>
            <div class="box w-sz"><span class="txt">11</span><span class="dd">${caret}</span></div>
            <div class="seg w-gs gs"><div><span class="ga big">A</span>${triUp}</div><div><span class="ga sm">A</span>${triDn}</div></div>
          </div>
          <div class="line">
            <div class="seg w-biu">
              <div class="on"><span class="letter">B</span></div>
              <div><span class="ital">I</span></div>
              <div><span class="under">U</span></div>
              <div>${caret}</div>
            </div>
            <div class="seg w-bd"><div>${iBorder}${caret}</div></div>
            <div class="seg w-clr"><div>${iFill}${caret}</div><div><span class="colora">A<i></i></span>${caret}</div></div>
          </div>
        </div>

        <div class="grp g-align stack">
          <div class="line">
            <div class="seg w-al"><div>${iAlignV(1)}</div><div>${iAlignV(3)}</div><div class="on">${iAlignV(5)}</div></div>
            <div class="seg w-or"><div><span class="orient"><span>ab</span>${iOrientArrow}</span>${caret}</div></div>
          </div>
          <div class="line">
            <div class="seg w-al"><div>${iAlignH("l")}</div><div>${iAlignH("c")}</div><div>${iAlignH("r")}</div></div>
            <div class="seg w-in"><div>${iIndent("l")}</div><div>${iIndent("r")}</div></div>
          </div>
        </div>

        <div class="grp g-wrap stack">
          <div class="wrapline">${iWrap}<span>Wrap Text</span></div>
          <div class="wrapline mergeline">${iMerge}<span>Merge &amp; Center</span>${caret}</div>
        </div>

        <div class="grp g-num stack">
          <div class="line">
            <div class="box w-gen"><span class="txt">General</span><span class="dd">${caret}</span></div>
          </div>
          <div class="line">
            <div class="seg w-acc"><div>${iCoins}${caret}</div><div>${iPct}</div><div>${iComma}</div></div>
            <div class="seg w-dec">
              <div><span class="dec"><div>${arrowLeft}<span>.0</span></div><div><span>.00</span></div></span></div>
              <div><span class="dec"><div><span>.00</span></div><div>${arrowRight}<span>.0</span></div></span></div>
            </div>
          </div>
        </div>

        <div class="grp g-sty">
          <div class="sty s1"><div class="ic">${iCond}${caret}</div><div class="lb">Conditional<br />Formatting</div></div>
          <div class="sty s2"><div class="ic">${iTable}${caret}</div><div class="lb">Format<br />as Table</div></div>
          <div class="sty s3"><div class="ic">${iCell}${caret}</div><div class="lb">Cell<br />Styles</div></div>
        </div>

        <div class="grp g-cells">
          <div class="cellrow"><span class="cw">${iInsert}</span><span>Insert</span>${caret}</div>
          <div class="cellrow"><span class="cw">${iDelete}</span><span>Delete</span>${caret}</div>
          <div class="cellrow"><span class="cw">${iFormat}</span><span>Format</span>${caret}</div>
        </div>

        <div class="grp g-edit end">
          <div class="ecol">
            <div>${iSum}${caret}</div>
            <div>${iDown}${caret}</div>
            <div>${iEraser}${caret}</div>
          </div>
          <div class="sortcol">
            <div class="ic"><span class="sorticon"><span class="a">A</span><span class="z">Z</span></span>${iFunnel}${caret}</div>
            <div class="lb">Sort &amp;<br />Filter</div>
          </div>
        </div>
      </div>

      <div class="fbar">
        <div class="name"><span>A1</span><span class="spin"><i class="u"></i><i class="dn"></i></span></div>
        <div class="fxs">${iX}${iCheck}<div class="fx">fx</div></div>
        <div class="ftext">Timings</div>
        <span class="caret fcar"></span>
      </div>

      <div class="sheet">
        <div class="outline">
          <div class="ol-l"><span>1</span><span>2</span></div>
          <div class="ol-m"></div>
          <div></div>
        </div>
        <div class="heads">
          <div class="corner"><svg width="12" height="11" viewBox="0 0 12 11"><path d="M12 0v11H0z" fill="#dcdcdc"/></svg></div>
          <div class="act">A</div>
          ${"B C D E F".split(" ").map((c) => html`<div>${c}</div>`)}
          <div class="gh">G</div>
          ${colLetters.map((c) => html`<div>${c}</div>`)}
          <div></div>
        </div>
        <div class="rows">${rows.map((r) => this.renderRow(r))}</div>
        <div class="sel"></div>
      </div>

      <div class="tabs">
        <div class="nav"><i class="lf"></i><i class="rt"></i></div>
        ${sheetTabs.map((t) => html`<div class="tab ${t.c}">${t.t}</div>`)}
        <div class="plus"><svg width="12" height="12" viewBox="0 0 12 12"><path d="M6 .5v11M.5 6h11" stroke="#666" stroke-width="2"/></svg></div>
      </div>

      <div class="status">
        <span>Ready</span>
        <div class="sr">
          <div class="vbtn"><svg width="14" height="14" viewBox="0 0 14 14"><path d="M.5.500h13v13H.5zM.5 4.800h13M.5 9.200h13M4.800.500v13M9.200.500v13" fill="none" stroke="#fff"/></svg></div>
          <div class="pg"><svg width="14" height="16" viewBox="0 0 14 16"><rect x="1" y=".5" width="12" height="15" fill="none" stroke="#666"/><path d="M3.500 4h7M3.500 6.500h7M3.500 9h7M3.500 11.500h7" stroke="#666"/></svg></div>
          <span class="mp">-</span>
          <div class="slider"></div>
          <span class="mp">+</span>
          <span class="zm">75%</span>
        </div>
      </div>
    </div>`;
  }
}
